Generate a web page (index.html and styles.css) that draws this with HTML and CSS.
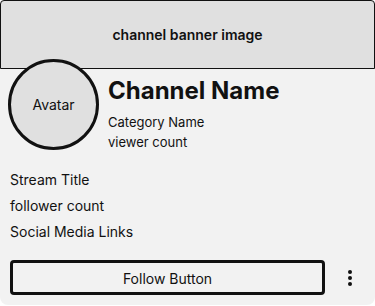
FILE: index.html
```html
<!DOCTYPE html>
<html>
<head>
<meta charset="utf-8">
<link rel="stylesheet" href="styles.css">
</head>
<body>
<div class="card">
  <div class="banner">channel banner image</div>
  <div class="header">
    <div class="avatar">Avatar</div>
    <div class="info">
      <div class="name">Channel Name</div>
      <div class="meta">Category Name</div>
      <div class="meta">viewer count</div>
    </div>
  </div>
  <div class="details">
    <div class="line">Stream Title</div>
    <div class="line">follower count</div>
    <div class="line">Social Media Links</div>
  </div>
  <div class="actions">
    <button class="follow">Follow Button</button>
    <div class="more"><span></span><span></span><span></span></div>
  </div>
</div>
</body>
</html>
```
FILE: styles.css
```css
* { box-sizing: border-box; }
html, body { margin: 0; padding: 0; background: #fff; }
body { font-family: Inter, "Noto Sans", sans-serif; color: #111; }
.card {
  width: 375px;
  height: 305px;
  background: #f2f2f2;
  border-radius: 4px 4px 8px 8px;
  display: flex;
  flex-direction: column;
}
.banner {
  height: 69px;
  background: #e0e0e0;
  border: 1px solid #111;
  border-radius: 4px 4px 0 0;
  display: flex;
  align-items: center;
  justify-content: center;
  font-size: 14px;
  font-weight: 600;
}
.header {
  display: flex;
  gap: 9px;
  padding-left: 8px;
  margin-top: -10px;
}
.avatar {
  width: 91px;
  height: 91px;
  border-radius: 50%;
  border: 3px solid #111;
  background: #e0e0e0;
  display: flex;
  align-items: center;
  justify-content: center;
  font-size: 14px;
  flex-shrink: 0;
}
.info {
  padding-top: 17px;
}
.name {
  font-size: 24px;
  font-weight: 700;
  line-height: 29px;
  margin-bottom: 7px;
}
.meta {
  font-size: 13px;
  line-height: 20px;
}
.details {
  padding: 15px 10px 0;
}
.line {
  font-size: 14px;
  line-height: 26px;
}
.actions {
  display: flex;
  align-items: center;
  padding: 15px 0 0 10px;
}
.follow {
  width: 315px;
  height: 35px;
  border: 3px solid #111;
  border-radius: 4px;
  background: #f2f2f2;
  font-family: Inter, "Noto Sans", sans-serif;
  font-size: 14px;
  color: #111;
  padding: 2px 0 0;
  line-height: 1;
}
.more {
  flex: 1;
  display: flex;
  flex-direction: column;
  align-items: center;
  gap: 2px;
}
.more span {
  width: 4px;
  height: 4px;
  border-radius: 50%;
  background: #111;
}
```
